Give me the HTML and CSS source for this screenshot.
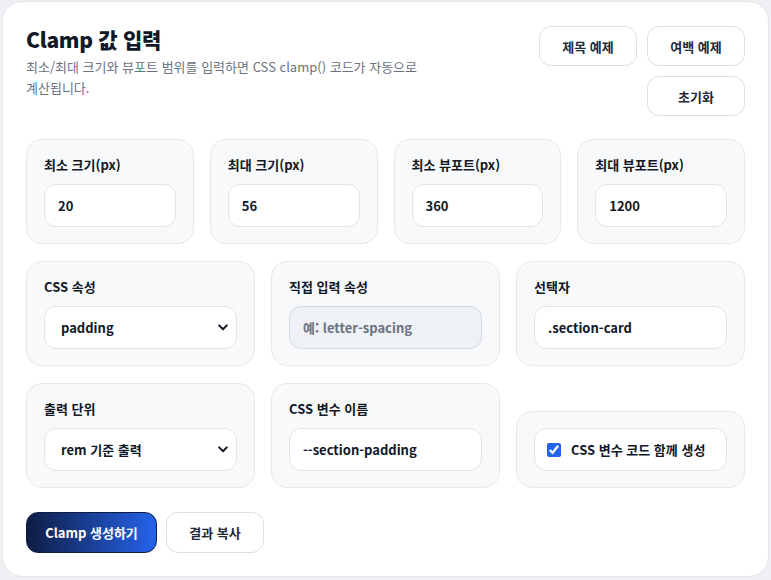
FILE: index.html
```html
<!DOCTYPE html>
<html lang="ko">
<head>
    <meta charset="UTF-8">
    <meta name="viewport" content="width=device-width, initial-scale=1.0">
    <title>Clamp 값 입력</title>
    <link rel="stylesheet" href="styles.css">
</head>
<body>
    <div class="panel">
        <div class="panel-head">
            <div class="head-text">
                <h2>Clamp 값 입력</h2>
                <p>최소/최대 크기와 뷰포트 범위를 입력하면 CSS clamp() 코드가 자동으로 계산됩니다.</p>
            </div>
            <div class="head-actions">
                <button class="btn">제목 예제</button>
                <button class="btn">여백 예제</button>
                <button class="btn">초기화</button>
            </div>
        </div>

        <div class="rows">
            <div class="grid four">
                <div class="field">
                    <label>최소 크기(px)</label>
                    <input type="text" value="20">
                </div>
                <div class="field">
                    <label>최대 크기(px)</label>
                    <input type="text" value="56">
                </div>
                <div class="field">
                    <label>최소 뷰포트(px)</label>
                    <input type="text" value="360">
                </div>
                <div class="field">
                    <label>최대 뷰포트(px)</label>
                    <input type="text" value="1200">
                </div>
            </div>

            <div class="grid three">
                <div class="field">
                    <label>CSS 속성</label>
                    <div class="select-wrap">
                        <select>
                            <option>padding</option>
                            <option>font-size</option>
                            <option>margin</option>
                            <option>gap</option>
                        </select>
                        <svg class="chevron" width="10" height="7" viewBox="0 0 10 7"><path d="M1.2 1.4 5 5.2 8.8 1.4" fill="none" stroke="#111827" stroke-width="2" stroke-linecap="round" stroke-linejoin="round"/></svg>
                    </div>
                </div>
                <div class="field">
                    <label>직접 입력 속성</label>
                    <input type="text" placeholder="예: letter-spacing" disabled>
                </div>
                <div class="field">
                    <label>선택자</label>
                    <input type="text" value=".section-card">
                </div>
            </div>

            <div class="grid three bottom">
                <div class="field">
                    <label>출력 단위</label>
                    <div class="select-wrap">
                        <select>
                            <option>rem 기준 출력</option>
                            <option>px 기준 출력</option>
                        </select>
                        <svg class="chevron" width="10" height="7" viewBox="0 0 10 7"><path d="M1.2 1.4 5 5.2 8.8 1.4" fill="none" stroke="#111827" stroke-width="2" stroke-linecap="round" stroke-linejoin="round"/></svg>
                    </div>
                </div>
                <div class="field">
                    <label>CSS 변수 이름</label>
                    <input type="text" value="--section-padding">
                </div>
                <div class="field">
                    <label class="check">
                        <input type="checkbox" checked>
                        <span>CSS 변수 코드 함께 생성</span>
                    </label>
                </div>
            </div>
        </div>

        <div class="actions">
            <button class="btn primary">Clamp 생성하기</button>
            <button class="btn">결과 복사</button>
        </div>
    </div>
</body>
</html>
```

FILE: styles.css
```css
body {
    margin: 0;
    padding: 1px 2px 2px 2px;
    background-color: #eef0f3;
    font-family: "Noto Sans CJK KR", "Noto Sans", sans-serif;
    color: #111827;
}
.panel {
    background: white;
    border: 1px solid #e3e6ea;
    border-radius: 20px;
    padding: 24px 23px 23px 23px;
    height: 576px;
    box-sizing: border-box;
}
.panel-head {
    display: flex;
    justify-content: space-between;
    align-items: flex-start;
}
.head-text {
    max-width: 400px;
}
.head-text h2 {
    margin: -1px 0 0 0;
    font-size: 21px;
    font-weight: 800;
    line-height: 28px;
    letter-spacing: -0.3px;
}
.head-text p {
    margin: 3px 0 0 0;
    font-size: 13px;
    line-height: 21px;
    color: #6b7280;
}
.head-actions {
    width: 206px;
    display: flex;
    flex-wrap: wrap;
    justify-content: flex-end;
    gap: 10px;
}
.btn {
    width: 98px;
    height: 40px;
    background: white;
    border: 1px solid #dcdfe4;
    border-radius: 12px;
    font-family: inherit;
    font-size: 13px;
    font-weight: 700;
    color: #1f2937;
    cursor: pointer;
}
.btn:hover {
    background: #f6f7f9;
}
.rows {
    display: flex;
    flex-direction: column;
    gap: 17px;
    margin-top: 23px;
}
.grid {
    display: grid;
    gap: 16px;
}
.grid.four {
    grid-template-columns: repeat(4, 1fr);
}
.grid.three {
    grid-template-columns: repeat(3, 1fr);
}
.grid.bottom {
    align-items: end;
}
.field {
    background: #f8f9fb;
    border: 1px solid #e6e8ec;
    border-radius: 16px;
    padding: 16px 17px;
}
.field > label {
    display: block;
    font-size: 13px;
    font-weight: 700;
    line-height: 18px;
    margin-bottom: 10px;
}
.field input[type="text"], .field select {
    display: block;
    width: 100%;
    box-sizing: border-box;
    height: 43px;
    padding: 0 13px;
    background: white;
    border: 1px solid #e1e4e8;
    border-radius: 12px;
    font-family: inherit;
    font-size: 13px;
    font-weight: 700;
    color: #111827;
    outline: none;
}
.field input:disabled {
    background: #eef1f5;
    border-color: #d5dae1;
}
.field input::placeholder {
    color: #6b7280;
}
.select-wrap {
    position: relative;
}
.field select {
    appearance: none;
    padding-left: 16px;
}
.chevron {
    position: absolute;
    right: 9px;
    top: 18px;
    pointer-events: none;
}
.field > label.check {
    display: flex;
    align-items: center;
    gap: 10px;
    height: 43px;
    box-sizing: border-box;
    margin: 0;
    padding: 0 12px;
    background: white;
    border: 1px solid #e1e4e8;
    border-radius: 12px;
}
.check input {
    width: 14px;
    height: 14px;
    margin: 0;
    accent-color: #2563eb;
}
.actions {
    display: flex;
    gap: 9px;
    margin-top: 24px;
}
.btn.primary {
    width: 131px;
    height: 41px;
    color: white;
    border-color: #0f1d44;
    background: linear-gradient(90deg, #0f1d44, #2563eb);
}
.actions .btn {
    height: 41px;
}
```
